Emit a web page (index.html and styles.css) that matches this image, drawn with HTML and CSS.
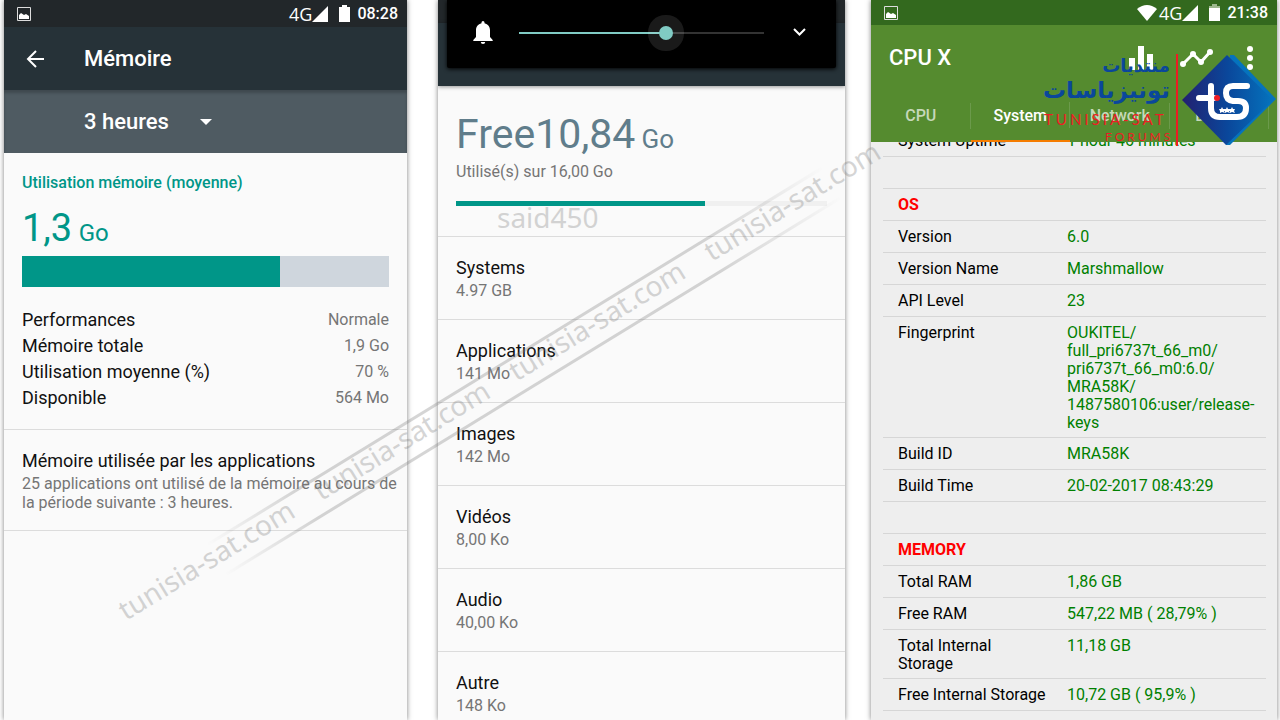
FILE: index.html
```html
<!DOCTYPE html>
<html lang="fr">
<head>
    <meta charset="UTF-8">
    <meta name="viewport" content="width=device-width, initial-scale=1.0">
    <title>Mémoire et stockage</title>
    <link rel="stylesheet" href="styles.css">
</head>
<body>
    <main class="screens">

        <!-- RAM -->
        <section class="screen screen-ram">
            <div class="statusbar">
                <svg width="14" height="14" viewBox="0 0 14 14"><path d="M.5.5h13v13H.5z" fill="none" stroke="#ddd"/><path d="M2 12V8l2-2 3 2 2-1 3 2v3z" fill="#fff"/></svg>
                <div class="status-right">
                    <span class="net">4G</span>
                    <svg class="signal" width="16" height="16" viewBox="0 0 16 16"><path d="M0 16L16 0v16z" fill="#fff"/></svg>
                    <svg class="battery" width="11" height="17" viewBox="0 0 11 17"><path d="M0 2h3V0h5v2h3v15H0z" fill="#fff"/></svg>
                    <span class="clock">08:28</span>
                </div>
            </div>
            <header class="appbar">
                <button class="icon-button" aria-label="Retour">
                    <svg width="18" height="18" viewBox="0 0 18 18" fill="none" stroke="#fff" stroke-width="2"><path d="M18 9H2M10 1L2 9l8 8"/></svg>
                </button>
                <h1>Mémoire</h1>
            </header>
            <div class="period">
                <select aria-label="Période">
                    <option>3 heures</option>
                    <option>6 heures</option>
                    <option>12 heures</option>
                    <option>1 jour</option>
                </select>
                <svg width="12" height="6" viewBox="0 0 12 6"><path d="M0 0h12L6 6z" fill="#fff"/></svg>
            </div>
            <div class="usage">
                <h2>Utilisation mémoire (moyenne)</h2>
                <p class="amount">1,3 <small>Go</small></p>
                <div class="bar"><div class="bar-fill" style="width: 70.3%"></div></div>
                <dl>
                    <div><dt>Performances</dt><dd>Normale</dd></div>
                    <div><dt>Mémoire totale</dt><dd>1,9 Go</dd></div>
                    <div><dt>Utilisation moyenne (%)</dt><dd>70 %</dd></div>
                    <div><dt>Disponible</dt><dd>564 Mo</dd></div>
                </dl>
            </div>
            <div class="apps">
                <h3>Mémoire utilisée par les applications</h3>
                <p>25 applications ont utilisé de la mémoire au cours de la période suivante : 3 heures.</p>
            </div>
        </section>

        <!-- Storage -->
        <section class="screen screen-storage">
            <div class="statusbar"></div>
            <header class="appbar"></header>
            <div class="volume">
                <svg width="20" height="23" viewBox="0 0 20 23" fill="#fff"><path d="M8.500 1.500a1.500 1.500 0 0 1 3 0v.7c3.500.8 5.500 3.500 5.500 7V16l2.700 3v1H.3v-1L3 16V9.200c0-3.500 2-6.200 5.500-7zM7.800 21h4.400a2.200 2 0 0 1-4.400 0z"/></svg>
                <input type="range" min="0" max="100" value="60" aria-label="Volume">
                <button class="icon-button" aria-label="Plus">
                    <svg width="13" height="9" viewBox="0 0 13 9" fill="none" stroke="#fff" stroke-width="2"><path d="M1 1l5.500 5.500L12 1"/></svg>
                </button>
            </div>
            <div class="total">
                <p class="free">Free10,84 <small>Go</small></p>
                <p class="used">Utilisé(s) sur 16,00 Go</p>
                <div class="thin-bar"><div class="bar-fill" style="width: 67%"></div></div>
            </div>
            <ul>
                <li><h3>Systems</h3><p>4.97 GB</p></li>
                <li><h3>Applications</h3><p>141 Mo</p></li>
                <li><h3>Images</h3><p>142 Mo</p></li>
                <li><h3>Vidéos</h3><p>8,00 Ko</p></li>
                <li><h3>Audio</h3><p>40,00 Ko</p></li>
                <li><h3>Autre</h3><p>148 Ko</p></li>
            </ul>
        </section>

        <!-- CPU X -->
        <section class="screen screen-cpu" lang="en">
            <div class="cpu-header">
                <div class="statusbar">
                    <svg width="14" height="14" viewBox="0 0 14 14"><path d="M.5.5h13v13H.5z" fill="none" stroke="#ddd"/><path d="M2 12V8l2-2 3 2 2-1 3 2v3z" fill="#fff"/></svg>
                    <div class="status-right">
                        <svg class="wifi" width="20" height="16" viewBox="0 0 20 16"><path d="M0 4Q10-4 20 4L10 16z" fill="#fff"/></svg>
                        <span class="net">4G</span>
                        <svg class="signal" width="16" height="16" viewBox="0 0 16 16"><path d="M0 16L16 0v16z" fill="#fff"/></svg>
                        <svg class="battery" width="11" height="17" viewBox="0 0 11 17"><path d="M0 2h3V0h5v2h3v3H0z" fill="#9db88e"/><path d="M0 4h11v13H0z" fill="#fff"/></svg>
                        <span class="clock">21:38</span>
                    </div>
                </div>
                <header class="appbar">
                    <h1>CPU X</h1>
                    <div class="actions">
                        <button class="icon-button" aria-label="Stats">
                            <svg width="24" height="24" viewBox="0 0 24 24" fill="#fff"><path d="M0 12h6v12H0zM9 0h6v24H9zM18 8h6v16h-6z"/></svg>
                        </button>
                        <button class="icon-button" aria-label="Graph">
                            <svg width="34" height="20" viewBox="0 0 34 20"><path d="M4 16L14 6l8 8L31 4" fill="none" stroke="#fff" stroke-width="3"/><g fill="#fff"><circle cx="4" cy="16" r="3"/><circle cx="14" cy="6" r="3"/><circle cx="22" cy="14" r="3"/><circle cx="31" cy="4" r="3"/></g></svg>
                        </button>
                        <button class="icon-button" aria-label="Menu">
                            <svg width="6" height="26" viewBox="0 0 6 26" fill="#fff"><circle cx="3" cy="4" r="3"/><circle cx="3" cy="13" r="3"/><circle cx="3" cy="22" r="3"/></svg>
                        </button>
                    </div>
                </header>
                <nav class="tabs">
                    <a href="#cpu">CPU</a>
                    <a href="#system" class="active">System</a>
                    <a href="#network">Network</a>
                    <a href="#device">Device</a>
                </nav>
                <svg class="logo" width="237" height="100" viewBox="0 0 237 100">
                    <defs>
                        <linearGradient id="blue" x1="0" y1="0" x2="1" y2="0">
                            <stop offset="0" stop-color="#23206f"/>
                            <stop offset=".5" stop-color="#0a479b"/>
                            <stop offset="1" stop-color="#0573bd"/>
                        </linearGradient>
                    </defs>
                    <g class="logo-arabic">
                        <text x="130" y="22" font-size="18">منتديات</text>
                        <text x="130" y="48" font-size="23">تونيزياسات</text>
                    </g>
                    <g class="logo-latin">
                        <text x="4" y="75" font-size="15">TUNISIA-SAT</text>
                        <text x="65" y="91" font-size="12">FORUMS</text>
                    </g>
                    <path d="M137 4v92" stroke="#ed1c24" stroke-width="2"/>
                    <path d="M190 5h4l42 44-46 46h-4z" fill="#0573bd"/>
                    <path d="M142 50l45-45 46 45-47 45z" fill="url(#blue)"/>
                    <g fill="none" stroke="#fff" stroke-width="6" stroke-linecap="round">
                        <path d="M171 36V58Q171 67 180 67H197Q206 67 206 58Q206 51 198 51H193Q186 50 186 43Q186 36 193 36H207"/>
                        <path d="M159 48H174"/>
                    </g>
                    <circle cx="177" cy="48" r="3" fill="#ed1c24"/>
                    <path d="M182 57l1 2h2l-1 2 1 2-3-1-2 1v-2l-1-2h2zM187 57l1 2h2l-1 2 1 2-3-1-2 1v-2l-1-2h2zM192 57l1 2h2l-1 2 1 2-3-1-2 1v-2l-1-2h2z" fill="#fff"/>
                </svg>
            </div>
            <table>
                <tr><th>System Uptime</th><td>1 hour 46 minutes</td></tr>
                <tr><th></th><td></td></tr>
                <tr class="group"><th colspan="2">OS</th></tr>
                <tr><th>Version</th><td>6.0</td></tr>
                <tr><th>Version Name</th><td>Marshmallow</td></tr>
                <tr><th>API Level</th><td>23</td></tr>
                <tr><th>Fingerprint</th><td>OUKITEL/<br>full_pri6737t_66_m0/<br>pri6737t_66_m0:6.0/<br>MRA58K/<br>1487580106:user/release-<br>keys</td></tr>
                <tr><th>Build ID</th><td>MRA58K</td></tr>
                <tr><th>Build Time</th><td>20-02-2017 08:43:29</td></tr>
                <tr><th></th><td></td></tr>
                <tr class="group"><th colspan="2">MEMORY</th></tr>
                <tr><th>Total RAM</th><td>1,86 GB</td></tr>
                <tr><th>Free RAM</th><td>547,22 MB ( 28,79% )</td></tr>
                <tr><th>Total Internal<br>Storage</th><td>11,18 GB</td></tr>
                <tr><th>Free Internal Storage</th><td>10,72 GB ( 95,9% )</td></tr>
                <tr><th></th><td></td></tr>
            </table>
        </section>
    </main>

    <svg class="watermark" viewBox="0 0 1280 720">
        <defs>
            <linearGradient id="fade">
                <stop offset="0" stop-color="#777" stop-opacity="0"/>
                <stop offset=".15" stop-color="#777"/>
                <stop offset=".8" stop-color="#777"/>
                <stop offset="1" stop-color="#777" stop-opacity="0"/>
            </linearGradient>
        </defs>
        <text x="497" y="228">said450</text>
        <g transform="translate(126 621) rotate(-31.5)">
            <text x="0" y="0">tunisia-sat.com</text>
            <text x="229" y="0">tunisia-sat.com</text>
            <text x="458" y="0">tunisia-sat.com</text>
            <text x="687" y="0">tunisia-sat.com</text>
            <rect x="110" y="-24" width="720" height="3" fill="url(#fade)"/>
            <rect x="110" y="11" width="720" height="3" fill="url(#fade)"/>
        </g>
    </svg>
</body>
</html>
```
FILE: styles.css
```css
* {
    box-sizing: border-box;
}
body {
    margin: 0;
    position: relative;
    height: 100vh;
    overflow: hidden;
    background: #fff;
    color: #111;
    font-family: Roboto, sans-serif;
    font-size: 16px;
}
h1, h2, h3, p, dl, dd, ul {
    margin: 0;
    padding: 0;
    font-weight: 400;
}
.screens {
    display: flex;
    height: 100%;
    padding: 0 3px 0 4px;
}
.screen {
    position: relative;
    flex: 406 1 0;
    min-width: 0;
    overflow: hidden;
    background: #fafafa;
    box-shadow: 0 0 5px rgba(0, 0, 0, 0.5);
}
.screen-ram {
    flex-grow: 403;
}
.screen-storage {
    flex-grow: 407;
    margin: 0 26px 0 31px;
}

/* bars shared by the three screens */
.statusbar {
    display: flex;
    align-items: center;
    justify-content: space-between;
    height: 27px;
    padding: 0 9px 0 13px;
    background: #22272a;
    color: #fff;
}
.status-right {
    display: flex;
    align-items: center;
}
.net {
    font-family: "Open Sans", sans-serif;
    font-size: 18px;
}
.wifi {
    margin-right: 2px;
}
.battery {
    margin: 0 7px 0 11px;
}
.clock {
    font-size: 16px;
    font-weight: 500;
}
.appbar {
    display: flex;
    align-items: center;
    height: 63px;
    padding: 0 22px;
    background: #263238;
    color: #fff;
}
.appbar h1 {
    font-size: 22px;
    font-weight: 500;
}
.icon-button {
    display: flex;
    padding: 0;
    border: 0;
    background: none;
}

/* RAM */
.screen-ram .icon-button {
    margin-right: 40px;
}
.period {
    display: flex;
    align-items: center;
    height: 63px;
    padding-left: 80px;
    background: #4f5b62;
    box-shadow: inset 0 3px 3px rgba(0, 0, 0, 0.2);
}
.period select {
    appearance: none;
    width: 116px;
    padding: 0;
    border: 0;
    background: none;
    color: #fff;
    font: 500 22px Roboto, sans-serif;
}
.usage {
    padding: 18px;
    border-bottom: 1px solid #dcdcdc;
}
.usage h2 {
    color: #009688;
    font-size: 16px;
    font-weight: 500;
    line-height: 24px;
}
.amount {
    padding-top: 6px;
    color: #009688;
    font-size: 38px;
    line-height: 55px;
}
.amount small {
    margin-left: -3px;
    font-size: 24px;
    line-height: 1;
}
.bar {
    height: 31px;
    margin-bottom: 20px;
    background: #cfd6dd;
}
.bar-fill {
    height: 100%;
    background: #009688;
}
.usage dl div {
    display: flex;
    justify-content: space-between;
    line-height: 26px;
}
.usage dt {
    font-size: 18px;
}
.usage dd {
    color: #757575;
}
.apps {
    padding: 18px 8px 18px 18px;
    border-bottom: 1px solid #dcdcdc;
}
h3 {
    font-size: 18px;
    line-height: 26px;
}
.apps p {
    color: #757575;
    line-height: 19px;
}

/* storage */
.screen-storage .statusbar {
    height: 23px;
}
.screen-storage .appbar {
    box-shadow: 0 1px 4px rgba(0, 0, 0, 0.4);
}
.volume {
    position: absolute;
    top: 0;
    left: 9px;
    right: 9px;
    display: flex;
    align-items: center;
    height: 68px;
    padding: 0 30px 3px 26px;
    border-radius: 0 0 2px 2px;
    background: #000;
    box-shadow: 0 1px 4px #000;
}
.volume input {
    appearance: none;
    flex: 1;
    min-width: 0;
    height: 36px;
    margin: 0 22px 0 19px;
    background: linear-gradient(90deg, #80cbc4 60%, #333 60%) center / calc(100% - 14px) 2px no-repeat;
}
.volume input::-webkit-slider-thumb {
    appearance: none;
    width: 14px;
    height: 14px;
    border-radius: 50%;
    background: #80cbc4;
    box-shadow: 0 0 0 11px rgba(255, 255, 255, 0.1);
}
.total {
    padding: 21px 18px 30px;
    border-bottom: 1px solid #dcdcdc;
}
.free {
    color: #607d8b;
    font-size: 41px;
    line-height: 55px;
}
.free small {
    margin-left: -4px;
    font-size: 26px;
    line-height: 1;
}
.used {
    color: #757575;
    line-height: 19px;
}
.thin-bar {
    height: 5px;
    margin-top: 20px;
    background: #f0f0f0;
}
.screen-storage ul {
    list-style: none;
}
.screen-storage li {
    height: 83px;
    padding: 18px;
    border-bottom: 1px solid #dcdcdc;
}
.screen-storage li p {
    color: #757575;
    line-height: 20px;
}

/* CPU X */
.screen-cpu {
    background: #eee;
}
.cpu-header {
    position: relative;
    z-index: 1;
    height: 142px;
    background: #558b2f;
}
.cpu-header .statusbar {
    height: 25px;
    background: #33691e;
}
.cpu-header .appbar {
    justify-content: space-between;
    height: 65px;
    padding: 0 24px 0 18px;
    background: none;
}
.actions {
    display: flex;
    align-items: center;
    gap: 26px;
}
.actions .icon-button:last-child {
    margin-left: 8px;
}
.tabs {
    display: flex;
    height: 52px;
    padding-right: 8px;
}
.tabs a {
    flex: 1;
    color: #c6d8b9;
    font-weight: 500;
    line-height: 52px;
    text-align: center;
    text-decoration: none;
    background: linear-gradient(#6b9a4b, #6b9a4b) right center / 1px 26px no-repeat;
}
.tabs .active {
    border-bottom: 2px solid #f57c00;
    color: #fff;
}
.logo {
    position: absolute;
    top: 50px;
    right: 0;
}
.logo-arabic {
    direction: rtl;
    fill: #0a479b;
    font-family: "DejaVu Sans", sans-serif;
    font-weight: 700;
}
.logo-latin {
    fill: #ed1c24;
    font-family: Lato, sans-serif;
    letter-spacing: 3px;
}
table {
    width: calc(100% - 23px);
    margin: -17px 11px 0 12px;
    border-spacing: 0;
    color: #000;
    line-height: 18px;
}
th, td {
    height: 32px;
    padding: 7px 0 5px;
    border-bottom: 1px solid #d6d6d6;
    font-weight: 400;
    text-align: left;
    vertical-align: top;
}
th {
    width: 184px;
    padding-left: 15px;
}
td {
    color: #008000;
}
.group th {
    color: #f00;
    font-weight: 700;
}

/* site stamp across the screens */
.watermark {
    position: absolute;
    top: 0;
    left: 0;
    width: 100%;
    opacity: 0.3;
    pointer-events: none;
    fill: #777;
    font-family: "Noto Sans", sans-serif;
    font-size: 28px;
}
```
